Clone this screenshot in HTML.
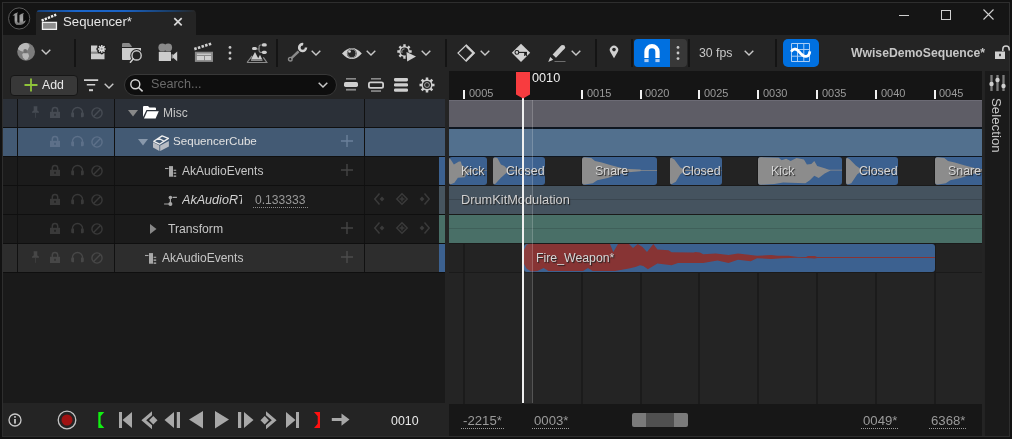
<!DOCTYPE html>
<html><head><meta charset="utf-8">
<style>
*{box-sizing:border-box;margin:0;padding:0}
html,body{width:1012px;height:439px;overflow:hidden;background:#121212;font-family:"Liberation Sans",sans-serif}
.a{position:absolute}
.t{position:absolute;white-space:nowrap;line-height:1;font-size:12px;will-change:transform}
svg{position:absolute;overflow:visible}
</style></head><body>
<!-- window frame -->
<div class="a" style="left:2px;top:2px;width:1008px;height:435px;border:1px solid #2e2e2e;background:#151515"></div>
<!-- title bar logo -->
<svg style="left:7px;top:6px" width="25" height="25" viewBox="0 0 25 25">
  <defs><linearGradient id="ug" x1="0" y1="0" x2="0" y2="1"><stop offset="0" stop-color="#8c8c8c"/><stop offset="0.6" stop-color="#a6a6a6"/><stop offset="1" stop-color="#6a6a6a"/></linearGradient></defs>
  <circle cx="12.15" cy="12.45" r="10.6" fill="#0b0b0b" stroke="#5c5c5c" stroke-width="1"/>
  <path d="M5.5 9.8 Q7.5 7 11 6.3 L10.3 7.8 L10.3 15.5 Q10.8 17.3 12.5 16.6 L12.5 9 Q14.5 7.3 17 6.9 L16.2 8.4 L16.2 15.8 L18.8 14.2 Q17.5 18.5 13.5 18.9 L9.5 18.9 Q7.3 18 7.6 15 L7.6 9.6 Q6.5 9.4 5.5 9.8 Z" fill="url(#ug)"/>
</svg>
<!-- tab -->
<div class="a" style="left:36px;top:10px;width:160px;height:25px;background:#242424;border-radius:4px 4px 0 0"></div>
<div class="a" style="left:37px;top:10px;width:158px;height:1.5px;border-radius:3px 3px 0 0;background:linear-gradient(90deg,#16407a 0%,#1a66cc 25%,#1a62c4 55%,#1a3d66 85%,#262626 100%)"></div>
<svg style="left:41px;top:14px" width="17" height="17" viewBox="0 0 17 17"><rect x="1.45" y="8.4" width="14" height="6.95" fill="#8e8e8e" stroke="#f0f0f0" stroke-width="1.3"/><path d="M0.6 6.6 L15.2 0.7" stroke="#eee" stroke-width="2.5" stroke-dasharray="2.3 1.1"/></svg>
<div class="t" style="left:63px;top:14.5px;font-size:13.2px;color:#e6e6e6">Sequencer*</div>
<svg style="left:173px;top:17px" width="10" height="10" viewBox="0 0 10 10"><path d="M1.3 1.1 L8.7 8.3 M8.7 1.1 L1.3 8.3" stroke="#d8d8d8" stroke-width="1.7"/></svg>
<!-- window controls -->
<div class="a" style="left:899px;top:15px;width:10px;height:1px;background:#d0d0d0"></div>
<div class="a" style="left:941px;top:10px;width:10px;height:10px;border:1px solid #d0d0d0"></div>
<svg style="left:983px;top:9px" width="11" height="11" viewBox="0 0 11 11"><path d="M0.5 0.5 L10.5 10.5 M10.5 0.5 L0.5 10.5" stroke="#d0d0d0" stroke-width="1.1"/></svg>

<!-- toolbar -->
<div class="a" style="left:3px;top:35px;width:1006px;height:36px;background:#242424"></div>

<!-- tree header row -->
<div class="a" style="left:3px;top:71px;width:446px;height:28px;background:#242424"></div>
<!-- ruler -->
<div class="a" style="left:449px;top:71px;width:533px;height:29px;background:#151515"></div>
<!-- sidebar -->
<div class="a" style="left:982px;top:71px;width:2px;height:365px;background:#242424"></div><div class="a" style="left:984px;top:71px;width:25px;height:365px;background:#1a1a1a;border-left:1px solid #232323"></div>

<!-- tree empty -->
<div class="a" style="left:3px;top:99px;width:442px;height:304px;background:#1a1a1a"></div>
<div class="a" style="left:445px;top:99px;width:4px;height:304px;background:#242424"></div>
<!-- track empty -->
<div class="a" style="left:449px;top:100px;width:533px;height:304px;background:#242424"></div>

<!-- transport bar -->
<div class="a" style="left:3px;top:403px;width:446px;height:33px;background:#242424"></div>
<div class="a" style="left:449px;top:404px;width:533px;height:32px;background:#171717"></div>

<!-- separators -->
<div class="a" style="left:74px;top:39px;width:2px;height:28px;background:#141414"></div>
<div class="a" style="left:276px;top:39px;width:2px;height:28px;background:#141414"></div>
<div class="a" style="left:445px;top:39px;width:2px;height:28px;background:#141414"></div>
<div class="a" style="left:595px;top:39px;width:2px;height:28px;background:#141414"></div>
<div class="a" style="left:631px;top:39px;width:2px;height:28px;background:#141414"></div>
<div class="a" style="left:688px;top:39px;width:2px;height:28px;background:#141414"></div>
<div class="a" style="left:775px;top:39px;width:2px;height:28px;background:#141414"></div>
<!-- globe -->
<svg style="left:17px;top:43px" width="18" height="18" viewBox="0 0 18 18">
  <defs><clipPath id="gl"><circle cx="9.1" cy="8.75" r="8.9"/></clipPath></defs>
  <circle cx="9.1" cy="8.75" r="8.9" fill="#7c7c7c"/>
  <g clip-path="url(#gl)">
  <path d="M0.8 6 L3.2 1.6 L7.9 -0.2 L11.2 0.6 L12.6 3 L10.7 6.9 L9.6 7.9 L6.3 8.8 L3.6 7.9 Z" fill="#b8b8b8"/>
  <path d="M6 10.3 L11.2 10.3 L12.1 12.9 L10.7 16.2 L8.2 17 L6 14.6 L5.2 11.8 Z" fill="#b8b8b8"/>
  </g>
  <circle cx="8.2" cy="8" r="1.9" fill="#6e6e6e"/>
</svg>
<svg style="left:41px;top:49px" width="10" height="6" viewBox="0 0 10 6"><path d="M0.7 0.7 L5 5 L9.3 0.7" fill="none" stroke="#c8c8c8" stroke-width="1.4"/></svg>
<!-- save new -->
<svg style="left:91px;top:44px" width="17" height="16" viewBox="0 0 17 16">
  <path d="M0 1.5 H6.5 V8 H13.5 V15.2 H0 Z" fill="#cdcdcd"/>
  <rect x="0" y="7.6" width="13.5" height="2.2" fill="#8a8a8a"/>
  <g stroke="#1e1e1e" stroke-width="3.2" stroke-linecap="round"><path d="M10.8 1 V8.8 M6.9 4.9 H14.7 M8.05 2.15 L13.55 7.65 M13.55 2.15 L8.05 7.65"/></g>
  <g stroke="#dcdcdc" stroke-width="1.5"><path d="M10.8 1 V8.8 M6.9 4.9 H14.7 M8.05 2.15 L13.55 7.65 M13.55 2.15 L8.05 7.65"/></g>
  <circle cx="10.7" cy="4.9" r="1.1" fill="#9a9a9a"/>
</svg>
<!-- folder search -->
<svg style="left:122px;top:43px" width="21" height="20" viewBox="0 0 21 20">
  <path d="M0 1.2 Q0 0.1 1.2 0.1 L7.2 0.1 L9.8 3.2 L9.8 3.9 L0 3.9 Z" fill="#8a8a8a"/>
  <path d="M0 4.9 L19 4.9 L19 17.1 L1.2 17.1 Q0 17.1 0 15.9 Z" fill="#cdcdcd"/>
  <circle cx="14.6" cy="12.4" r="6.3" fill="#242424"/>
  <path d="M11.6 15.6 L8.2 19.3" stroke="#242424" stroke-width="3.4"/>
  <circle cx="14.6" cy="12.4" r="4.6" fill="#242424" stroke="#cdcdcd" stroke-width="1.4"/>
  <path d="M11.4 15.8 L8.4 19.2" stroke="#cdcdcd" stroke-width="1.6" stroke-linecap="round"/>
</svg>
<!-- camera -->
<svg style="left:158px;top:43px" width="20" height="19" viewBox="0 0 20 19">
  <circle cx="4.3" cy="4.4" r="3.9" fill="#8a8a8a"/><circle cx="10.2" cy="4.4" r="3.9" fill="#8a8a8a"/>
  <rect x="0.8" y="8.8" width="12.2" height="9.3" rx="0.6" fill="#cdcdcd"/>
  <path d="M14.8 12.3 L19.2 8.6 L19.2 18.2 L14.8 14.5 Z" fill="#cdcdcd"/>
  <rect x="13.5" y="11.3" width="1.6" height="4.2" fill="#9a9a9a"/>
</svg>
<!-- clapper -->
<svg style="left:194px;top:43px" width="20" height="19" viewBox="0 0 20 19">
  <path d="M0.3 6.1 L18 0.4" stroke="#d0d0d0" stroke-width="2.7" stroke-dasharray="2.5 1.3"/>
  <rect x="0.9" y="8.75" width="18.1" height="10.15" fill="#8a8a8a"/>
  <rect x="2.9" y="13" width="7.1" height="4.1" fill="#cfcfcf"/><rect x="11" y="13" width="6.1" height="4.1" fill="#cfcfcf"/>
  <rect x="2.9" y="10.6" width="14.2" height="1.3" fill="#cfcfcf"/>
</svg>
<!-- dots -->
<svg style="left:227px;top:45px" width="6" height="16" viewBox="0 0 6 16"><circle cx="3" cy="2.4" r="1.4" fill="#c8c8c8"/><circle cx="3" cy="8" r="1.4" fill="#c8c8c8"/><circle cx="3" cy="13.6" r="1.4" fill="#c8c8c8"/></svg>
<!-- hierarchy -->
<svg style="left:244px;top:40px" width="28" height="26" viewBox="0 0 28 26">
  <path d="M13 9 H15.1 M17.8 5 H16.6 Q15.1 5 15.1 6.5 V10.8 Q15.1 12.3 16.6 12.3 H17.8" fill="none" stroke="#8a8a8a" stroke-width="1.2"/>
  <rect x="8" y="7.1" width="5" height="3" rx="1.5" fill="#cdcdcd"/>
  <rect x="17.8" y="3.3" width="5" height="3.2" rx="1.6" fill="#cdcdcd"/>
  <rect x="17.8" y="10.7" width="5" height="3.2" rx="1.6" fill="#cdcdcd"/>
  <path d="M3 22.5 H22.8 L19.3 17.3 M3 22.5 L8.2 15.8" fill="none" stroke="#8a8a8a" stroke-width="1.2"/>
  <path d="M7 19.6 L11 12.1 L14.2 18.2 L16 14.8 L18.3 19.6 Z" fill="#cdcdcd"/>
  <rect x="7" y="19.5" width="11.5" height="1.5" fill="#8a8a8a"/>
</svg>
<!-- wrench -->
<svg style="left:288px;top:43px" width="20" height="20" viewBox="0 0 20 20">
  <path d="M10.6 8.3 L3.2 15.3" stroke="#8a8a8a" stroke-width="2.5"/>
  <circle cx="2.3" cy="16.2" r="1.8" fill="none" stroke="#8a8a8a" stroke-width="1.4"/>
  <path d="M19.3 4.6 A4.7 4.7 0 1 1 15.4 -0.1 L15 2.6 A2.1 2.1 0 1 0 16.8 4.6 Z" fill="#d0d0d0"/>
</svg>
<svg style="left:311px;top:50px" width="10" height="6" viewBox="0 0 10 6"><path d="M0.7 0.7 L5 5 L9.3 0.7" fill="none" stroke="#c8c8c8" stroke-width="1.4"/></svg>
<!-- eye -->
<svg style="left:342px;top:47px" width="20" height="13" viewBox="0 0 20 13">
  <path d="M0 6.4 Q9.9 -4.6 19.8 6.4 Q9.9 17.4 0 6.4 Z" fill="#cfcfcf"/>
  <circle cx="9.8" cy="6.4" r="4.9" fill="#2a2a2a"/>
  <circle cx="9.8" cy="6.4" r="4.1" fill="none" stroke="#a8a8a8" stroke-width="0.9"/>
  <circle cx="9.8" cy="6.4" r="3.4" fill="#242424"/>
  <circle cx="7.6" cy="4.5" r="1.3" fill="#cfcfcf"/>
</svg>
<svg style="left:366px;top:50px" width="10" height="6" viewBox="0 0 10 6"><path d="M0.7 0.7 L5 5 L9.3 0.7" fill="none" stroke="#c8c8c8" stroke-width="1.4"/></svg>
<!-- gear play -->
<svg style="left:397px;top:44px" width="20" height="19" viewBox="0 0 20 19">
  <path d="M12.66 6.30 L14.70 6.30 L14.70 8.70 L12.66 8.70 L12.00 10.30 L13.44 11.74 L11.74 13.44 L10.30 12.00 L8.70 12.66 L8.70 14.70 L6.30 14.70 L6.30 12.66 L4.70 12.00 L3.26 13.44 L1.56 11.74 L3.00 10.30 L2.34 8.70 L0.30 8.70 L0.30 6.30 L2.34 6.30 L3.00 4.70 L1.56 3.26 L3.26 1.56 L4.70 3.00 L6.30 2.34 L6.30 0.30 L8.70 0.30 L8.70 2.34 L10.30 3.00 L11.74 1.56 L13.44 3.26 L12.00 4.70 Z" fill="#cfcfcf"/>
  <circle cx="7.5" cy="7.5" r="3.9" fill="#242424"/>
  <path d="M7.5 4.8 A2.7 2.7 0 0 0 5.2 9" fill="none" stroke="#8a8a8a" stroke-width="1.2"/>
  <path d="M8.3 6.8 L19.6 12.3 L9.3 18.6 Z" fill="#242424"/>
  <path d="M9.5 8 L19 12.4 L10.2 17.6 Z" fill="#cfcfcf"/>
</svg>
<svg style="left:421px;top:50px" width="10" height="6" viewBox="0 0 10 6"><path d="M0.7 0.7 L5 5 L9.3 0.7" fill="none" stroke="#c8c8c8" stroke-width="1.4"/></svg>
<!-- diamond -->
<svg style="left:457px;top:44px" width="19" height="19" viewBox="0 0 19 19">
  <path d="M9.2 1 L17.4 9.1 L9.2 17.2 L1 9.1 Z" fill="none" stroke="#cfcfcf" stroke-width="1.2"/>
  <path d="M9.2 0.6 L17.8 9.1 L9.2 17.6 L9.2 14.9 L15.1 9.1 L9.2 3.3 Z" fill="#cfcfcf"/>
</svg>
<svg style="left:480px;top:50px" width="10" height="6" viewBox="0 0 10 6"><path d="M0.7 0.7 L5 5 L9.3 0.7" fill="none" stroke="#c8c8c8" stroke-width="1.4"/></svg>
<!-- key diamond -->
<svg style="left:512px;top:44px" width="19" height="19" viewBox="0 0 19 19">
  <path d="M9 -0.3 L18.2 8.7 L9 17.9 L-0.2 8.7 Z" fill="#cfcfcf"/>
  <circle cx="4.9" cy="8.4" r="1.9" fill="none" stroke="#1a1a1a" stroke-width="1.1"/>
  <path d="M6.8 8.4 H14.9" stroke="#1a1a1a" stroke-width="1.1"/>
  <path d="M12.2 8 H14.9 V11.9 H14 L13.55 10.6 L13.1 11.9 H12.2 Z" fill="#1a1a1a"/>
</svg>
<!-- pencil -->
<svg style="left:548px;top:44px" width="19" height="19" viewBox="0 0 19 19">
  <path d="M6.3 12.1 L14.8 3.2" stroke="#cfcfcf" stroke-width="4.6"/>
  <circle cx="14.8" cy="3.2" r="2.3" fill="#cfcfcf"/>
  <path d="M0.2 17.9 L2.3 12.9 L5.2 15.7 Z" fill="#cfcfcf"/>
  <path d="M6.5 17.5 H17.5" stroke="#6e6e6e" stroke-width="1"/>
</svg>
<svg style="left:571px;top:50px" width="10" height="6" viewBox="0 0 10 6"><path d="M0.7 0.7 L5 5 L9.3 0.7" fill="none" stroke="#c8c8c8" stroke-width="1.4"/></svg>
<!-- pin -->
<svg style="left:609px;top:45px" width="10" height="14" viewBox="0 0 10 14">
  <path d="M5 13.3 L1.5 7.3 A4.2 4.2 0 1 1 8.5 7.3 Z" fill="#cfcfcf"/>
  <circle cx="5" cy="4.6" r="1.8" fill="#242424"/>
</svg>
<!-- magnet button -->
<div class="a" style="left:634px;top:39px;width:53px;height:28px;background:#383838;border-radius:4px"></div>
<div class="a" style="left:634px;top:39px;width:36px;height:28px;background:#0070e0;border-radius:4px 0 0 4px"></div>
<svg style="left:644px;top:43.8px" width="16" height="19" viewBox="0 0 16 19">
  <path d="M2.5 14 L2.5 7.7 A5.5 5.5 0 0 1 13.5 7.7 L13.5 14" fill="none" stroke="#fff" stroke-width="4.3"/>
  <rect x="0.4" y="15.1" width="4.2" height="3" fill="#b0cdf2"/><rect x="11.4" y="15.1" width="4.2" height="3" fill="#b0cdf2"/>
</svg>
<svg style="left:675px;top:45px" width="6" height="16" viewBox="0 0 6 16"><circle cx="3" cy="2.4" r="1.4" fill="#c8c8c8"/><circle cx="3" cy="8" r="1.4" fill="#c8c8c8"/><circle cx="3" cy="13.6" r="1.4" fill="#c8c8c8"/></svg>
<div class="t" style="left:699px;top:47px;font-size:12.3px;color:#c8c8c8">30 fps</div>
<svg style="left:744px;top:50px" width="10" height="6" viewBox="0 0 10 6"><path d="M0.7 0.7 L5 5 L9.3 0.7" fill="none" stroke="#c8c8c8" stroke-width="1.4"/></svg>
<!-- curve button -->
<div class="a" style="left:783px;top:39px;width:36px;height:28px;background:#0070e0;border-radius:5px"></div>
<svg style="left:791px;top:43px" width="20" height="19" viewBox="0 0 20 19">
  <path d="M0.5 0.5 H18.5 V18.5 H0.5 Z M6.5 0.5 V18.5 M12.8 0.5 V18.5 M0.5 6.5 H18.5 M0.5 13.2 H18.5" fill="none" stroke="#a9cdf6" stroke-width="1"/>
  <path d="M0.2 8.6 C2.2 5.2 5 5.2 7.8 8.4 C10.5 11.8 12.8 13.6 15 13.4 C17.2 13.2 18.5 11.5 18.8 8.3" fill="none" stroke="#fff" stroke-width="2.8"/>
</svg>
<div class="t" style="left:851px;top:47px;font-size:12.2px;font-weight:bold;color:#c6c6c6">WwiseDemoSequence*</div>
<!-- lock -->
<svg style="left:995px;top:45px" width="15" height="14" viewBox="0 0 15 14">
  <path d="M7.8 6 L7.8 4.2 A3.2 3.2 0 0 1 14.2 4.2 L14.2 5.5" fill="none" stroke="#cfcfcf" stroke-width="1.5"/>
  <rect x="0" y="6.5" width="10" height="7.5" fill="#cfcfcf"/>
  <rect x="4.2" y="8.8" width="1.6" height="2.4" fill="#242424"/>
</svg>

<!-- search row -->
<div class="a" style="left:9.5px;top:74.5px;width:68px;height:21px;background:#383838;border-radius:4px;border:1px solid #161616"></div>
<svg style="left:24px;top:78px" width="14" height="14" viewBox="0 0 14 14"><path d="M7 0.5 V13.5 M0.5 7 H13.5" stroke="#8fc43a" stroke-width="1.8"/></svg>
<div class="t" style="left:42px;top:79px;font-size:12.3px;color:#e8e8e8">Add</div>
<svg style="left:84px;top:79px" width="15" height="13" viewBox="0 0 15 13"><path d="M0 1.1 H14.2 M2.8 5.8 H11.2" stroke="#d0d0d0" stroke-width="1.6"/><rect x="5" y="10.2" width="4" height="2" fill="#d0d0d0"/></svg>
<svg style="left:104px;top:83px" width="10" height="6" viewBox="0 0 10 6"><path d="M0.7 0.7 L5 5 L9.3 0.7" fill="none" stroke="#c8c8c8" stroke-width="1.4"/></svg>
<div class="a" style="left:124px;top:74px;width:213px;height:22px;background:#0e0e0e;border:1px solid #383838;border-radius:11px"></div>
<svg style="left:130px;top:79px" width="14" height="13" viewBox="0 0 14 13"><circle cx="5.3" cy="5.3" r="4.5" fill="none" stroke="#d6d6d6" stroke-width="1.4"/><path d="M8.5 8.5 L12.6 12.4" stroke="#d6d6d6" stroke-width="1.6"/></svg>
<div class="t" style="left:151px;top:78px;font-size:12.6px;color:#6a6a6a">Search...</div>
<svg style="left:318px;top:82px" width="10" height="6" viewBox="0 0 10 6"><path d="M0.7 0.7 L5 5 L9.3 0.7" fill="none" stroke="#c8c8c8" stroke-width="1.5"/></svg>
<svg style="left:344px;top:78px" width="14" height="14" viewBox="0 0 14 14">
  <rect x="2" y="0" width="10" height="1.6" fill="#8a8a8a"/><rect x="0" y="3.9" width="14" height="5" rx="1.6" fill="#cfcfcf"/><rect x="2" y="10.8" width="10" height="1.8" fill="#8a8a8a"/>
</svg>
<svg style="left:368px;top:78px" width="16" height="14" viewBox="0 0 16 14">
  <rect x="3" y="0" width="10" height="1.6" fill="#8a8a8a"/><rect x="0.9" y="4.3" width="14.2" height="5.6" rx="1.6" fill="none" stroke="#cfcfcf" stroke-width="1.8"/><rect x="3" y="12.2" width="10" height="1.7" fill="#8a8a8a"/>
</svg>
<svg style="left:394px;top:78px" width="14" height="14" viewBox="0 0 14 14">
  <rect x="0" y="0" width="14" height="3.4" rx="1.3" fill="#cfcfcf"/><rect x="0" y="5.2" width="14" height="3.4" rx="1.3" fill="#cfcfcf"/><rect x="0" y="10.4" width="14" height="3.4" rx="1.3" fill="#cfcfcf"/>
</svg>
<svg style="left:419px;top:77px" width="16" height="16" viewBox="0 0 16 16"><path d="M13.46 6.74 L15.50 6.75 L15.50 9.25 L13.46 9.26 L12.75 10.96 L14.18 12.42 L12.42 14.18 L10.96 12.75 L9.26 13.46 L9.25 15.50 L6.75 15.50 L6.74 13.46 L5.04 12.75 L3.58 14.18 L1.82 12.42 L3.25 10.96 L2.54 9.26 L0.50 9.25 L0.50 6.75 L2.54 6.74 L3.25 5.04 L1.82 3.58 L3.58 1.82 L5.04 3.25 L6.74 2.54 L6.75 0.50 L9.25 0.50 L9.26 2.54 L10.96 3.25 L12.42 1.82 L14.18 3.58 L12.75 5.04 Z" fill="#cfcfcf"/><circle cx="8" cy="8" r="4.1" fill="#242424"/><circle cx="8" cy="8" r="2.4" fill="none" stroke="#a0a0a0" stroke-width="1"/></svg>


<div class="a" style="left:3px;top:99px;width:442px;height:28px;background:#2b3038"></div>
<div class="a" style="left:3px;top:127px;width:442px;height:1px;background:#0f0f0f"></div>
<div class="a" style="left:17px;top:99px;width:1px;height:28px;background:#111"></div>
<div class="a" style="left:114px;top:99px;width:1px;height:28px;background:#111"></div>
<div class="a" style="left:364px;top:99px;width:1px;height:28px;background:#111"></div>
<svg style="left:31px;top:106px" width="9" height="13" viewBox="0 0 9 13"><path d="M2.6 0.3 H6.4 Q6.2 2.5 6.3 4.5 Q8.2 5.2 8.1 6.8 H0.9 Q0.8 5.2 2.7 4.5 Q2.8 2.5 2.6 0.3 Z" fill="#464b53"/><path d="M4.5 7 V11.8" stroke="#464b53" stroke-width="1.1" opacity="0.6"/></svg>
<svg style="left:50px;top:107px" width="10" height="11" viewBox="0 0 10 11"><path d="M2.3 5 V3.3 A2.7 2.7 0 0 1 7.7 3.3 V5" fill="none" stroke="#464b53" stroke-width="1.5"/><rect x="0" y="4.8" width="10" height="6.2" fill="#464b53"/><rect x="4.3" y="6.8" width="1.4" height="2" fill="#2b3038"/></svg>
<svg style="left:71px;top:107px" width="13" height="11" viewBox="0 0 13 11"><path d="M1.4 8 V5.6 A5.1 5.1 0 0 1 11.6 5.6 V8" fill="none" stroke="#464b53" stroke-width="1.3"/><path d="M0.2 6.8 Q0.2 5.6 1.6 5.6 H3 V10.2 H1.6 Q0.2 10.2 0.2 9 Z M12.8 6.8 Q12.8 5.6 11.4 5.6 H10 V10.2 H11.4 Q12.8 10.2 12.8 9 Z" fill="#464b53"/></svg>
<svg style="left:91px;top:107px" width="12" height="12" viewBox="0 0 12 12"><circle cx="6" cy="6" r="5.1" fill="none" stroke="#464b53" stroke-width="1.4"/><path d="M2.6 9.4 L9.4 2.6" stroke="#464b53" stroke-width="1.4"/></svg>
<div class="a" style="left:3px;top:128px;width:442px;height:28px;background:#435a74"></div>
<div class="a" style="left:3px;top:156px;width:442px;height:1px;background:#0f0f0f"></div>
<div class="a" style="left:17px;top:128px;width:1px;height:28px;background:#111"></div>
<div class="a" style="left:114px;top:128px;width:1px;height:28px;background:#111"></div>
<div class="a" style="left:364px;top:128px;width:1px;height:28px;background:#111"></div>
<svg style="left:50px;top:136px" width="10" height="11" viewBox="0 0 10 11"><path d="M2.3 5 V3.3 A2.7 2.7 0 0 1 7.7 3.3 V5" fill="none" stroke="#5d7089" stroke-width="1.5"/><rect x="0" y="4.8" width="10" height="6.2" fill="#5d7089"/><rect x="4.3" y="6.8" width="1.4" height="2" fill="#435a74"/></svg>
<svg style="left:71px;top:136px" width="13" height="11" viewBox="0 0 13 11"><path d="M1.4 8 V5.6 A5.1 5.1 0 0 1 11.6 5.6 V8" fill="none" stroke="#5d7089" stroke-width="1.3"/><path d="M0.2 6.8 Q0.2 5.6 1.6 5.6 H3 V10.2 H1.6 Q0.2 10.2 0.2 9 Z M12.8 6.8 Q12.8 5.6 11.4 5.6 H10 V10.2 H11.4 Q12.8 10.2 12.8 9 Z" fill="#5d7089"/></svg>
<svg style="left:91px;top:136px" width="12" height="12" viewBox="0 0 12 12"><circle cx="6" cy="6" r="5.1" fill="none" stroke="#5d7089" stroke-width="1.4"/><path d="M2.6 9.4 L9.4 2.6" stroke="#5d7089" stroke-width="1.4"/></svg>
<svg style="left:341px;top:135px" width="12" height="12" viewBox="0 0 12 12"><path d="M6 0 V12 M0 6 H12" stroke="#6b809a" stroke-width="1.4"/></svg>
<div class="a" style="left:3px;top:157px;width:442px;height:28px;background:#1b1b1b"></div>
<div class="a" style="left:3px;top:185px;width:442px;height:1px;background:#0f0f0f"></div>
<div class="a" style="left:439px;top:157px;width:6px;height:28px;background:#3c6190"></div>
<div class="a" style="left:17px;top:157px;width:1px;height:28px;background:#111"></div>
<div class="a" style="left:114px;top:157px;width:1px;height:28px;background:#111"></div>
<div class="a" style="left:364px;top:157px;width:1px;height:28px;background:#111"></div>
<svg style="left:50px;top:165px" width="10" height="11" viewBox="0 0 10 11"><path d="M2.3 5 V3.3 A2.7 2.7 0 0 1 7.7 3.3 V5" fill="none" stroke="#393939" stroke-width="1.5"/><rect x="0" y="4.8" width="10" height="6.2" fill="#393939"/><rect x="4.3" y="6.8" width="1.4" height="2" fill="#1b1b1b"/></svg>
<svg style="left:71px;top:165px" width="13" height="11" viewBox="0 0 13 11"><path d="M1.4 8 V5.6 A5.1 5.1 0 0 1 11.6 5.6 V8" fill="none" stroke="#393939" stroke-width="1.3"/><path d="M0.2 6.8 Q0.2 5.6 1.6 5.6 H3 V10.2 H1.6 Q0.2 10.2 0.2 9 Z M12.8 6.8 Q12.8 5.6 11.4 5.6 H10 V10.2 H11.4 Q12.8 10.2 12.8 9 Z" fill="#393939"/></svg>
<svg style="left:91px;top:165px" width="12" height="12" viewBox="0 0 12 12"><circle cx="6" cy="6" r="5.1" fill="none" stroke="#393939" stroke-width="1.4"/><path d="M2.6 9.4 L9.4 2.6" stroke="#393939" stroke-width="1.4"/></svg>
<svg style="left:341px;top:164px" width="12" height="12" viewBox="0 0 12 12"><path d="M6 0 V12 M0 6 H12" stroke="#444" stroke-width="1.4"/></svg>
<div class="a" style="left:3px;top:186px;width:442px;height:28px;background:#1b1b1b"></div>
<div class="a" style="left:3px;top:214px;width:442px;height:1px;background:#0f0f0f"></div>
<div class="a" style="left:439px;top:186px;width:6px;height:28px;background:#47555f"></div>
<div class="a" style="left:17px;top:186px;width:1px;height:28px;background:#111"></div>
<div class="a" style="left:114px;top:186px;width:1px;height:28px;background:#111"></div>
<div class="a" style="left:364px;top:186px;width:1px;height:28px;background:#111"></div>
<svg style="left:50px;top:194px" width="10" height="11" viewBox="0 0 10 11"><path d="M2.3 5 V3.3 A2.7 2.7 0 0 1 7.7 3.3 V5" fill="none" stroke="#393939" stroke-width="1.5"/><rect x="0" y="4.8" width="10" height="6.2" fill="#393939"/><rect x="4.3" y="6.8" width="1.4" height="2" fill="#1b1b1b"/></svg>
<svg style="left:71px;top:194px" width="13" height="11" viewBox="0 0 13 11"><path d="M1.4 8 V5.6 A5.1 5.1 0 0 1 11.6 5.6 V8" fill="none" stroke="#393939" stroke-width="1.3"/><path d="M0.2 6.8 Q0.2 5.6 1.6 5.6 H3 V10.2 H1.6 Q0.2 10.2 0.2 9 Z M12.8 6.8 Q12.8 5.6 11.4 5.6 H10 V10.2 H11.4 Q12.8 10.2 12.8 9 Z" fill="#393939"/></svg>
<svg style="left:91px;top:194px" width="12" height="12" viewBox="0 0 12 12"><circle cx="6" cy="6" r="5.1" fill="none" stroke="#393939" stroke-width="1.4"/><path d="M2.6 9.4 L9.4 2.6" stroke="#393939" stroke-width="1.4"/></svg>
<svg style="left:374px;top:193px" width="12" height="12" viewBox="0 0 12 12"><path d="M5.5 0.5 L0.8 6 L5.5 11.5" fill="none" stroke="#3a3a3a" stroke-width="1.5"/><path d="M8 3.6 L10.4 6 L8 8.4 L5.6 6 Z" fill="#3a3a3a"/></svg>
<svg style="left:396px;top:193px" width="12" height="12" viewBox="0 0 12 12"><path d="M6 0.8 L11.2 6 L6 11.2 L0.8 6 Z" fill="none" stroke="#3a3a3a" stroke-width="1.5"/><path d="M6 3.5 V8.5 M3.5 6 H8.5" stroke="#3a3a3a" stroke-width="1.5"/></svg>
<svg style="left:418px;top:193px" width="12" height="12" viewBox="0 0 12 12"><path d="M6.5 0.5 L11.2 6 L6.5 11.5" fill="none" stroke="#3a3a3a" stroke-width="1.5"/><path d="M4 3.6 L6.4 6 L4 8.4 L1.6 6 Z" fill="#3a3a3a"/></svg>
<div class="a" style="left:3px;top:215px;width:442px;height:28px;background:#1b1b1b"></div>
<div class="a" style="left:3px;top:243px;width:442px;height:1px;background:#0f0f0f"></div>
<div class="a" style="left:439px;top:215px;width:6px;height:28px;background:#496f67"></div>
<div class="a" style="left:17px;top:215px;width:1px;height:28px;background:#111"></div>
<div class="a" style="left:114px;top:215px;width:1px;height:28px;background:#111"></div>
<div class="a" style="left:364px;top:215px;width:1px;height:28px;background:#111"></div>
<svg style="left:50px;top:223px" width="10" height="11" viewBox="0 0 10 11"><path d="M2.3 5 V3.3 A2.7 2.7 0 0 1 7.7 3.3 V5" fill="none" stroke="#393939" stroke-width="1.5"/><rect x="0" y="4.8" width="10" height="6.2" fill="#393939"/><rect x="4.3" y="6.8" width="1.4" height="2" fill="#1b1b1b"/></svg>
<svg style="left:71px;top:223px" width="13" height="11" viewBox="0 0 13 11"><path d="M1.4 8 V5.6 A5.1 5.1 0 0 1 11.6 5.6 V8" fill="none" stroke="#393939" stroke-width="1.3"/><path d="M0.2 6.8 Q0.2 5.6 1.6 5.6 H3 V10.2 H1.6 Q0.2 10.2 0.2 9 Z M12.8 6.8 Q12.8 5.6 11.4 5.6 H10 V10.2 H11.4 Q12.8 10.2 12.8 9 Z" fill="#393939"/></svg>
<svg style="left:91px;top:223px" width="12" height="12" viewBox="0 0 12 12"><circle cx="6" cy="6" r="5.1" fill="none" stroke="#393939" stroke-width="1.4"/><path d="M2.6 9.4 L9.4 2.6" stroke="#393939" stroke-width="1.4"/></svg>
<svg style="left:341px;top:222px" width="12" height="12" viewBox="0 0 12 12"><path d="M6 0 V12 M0 6 H12" stroke="#444" stroke-width="1.4"/></svg>
<svg style="left:374px;top:222px" width="12" height="12" viewBox="0 0 12 12"><path d="M5.5 0.5 L0.8 6 L5.5 11.5" fill="none" stroke="#3a3a3a" stroke-width="1.5"/><path d="M8 3.6 L10.4 6 L8 8.4 L5.6 6 Z" fill="#3a3a3a"/></svg>
<svg style="left:396px;top:222px" width="12" height="12" viewBox="0 0 12 12"><path d="M6 0.8 L11.2 6 L6 11.2 L0.8 6 Z" fill="none" stroke="#3a3a3a" stroke-width="1.5"/><path d="M6 3.5 V8.5 M3.5 6 H8.5" stroke="#3a3a3a" stroke-width="1.5"/></svg>
<svg style="left:418px;top:222px" width="12" height="12" viewBox="0 0 12 12"><path d="M6.5 0.5 L11.2 6 L6.5 11.5" fill="none" stroke="#3a3a3a" stroke-width="1.5"/><path d="M4 3.6 L6.4 6 L4 8.4 L1.6 6 Z" fill="#3a3a3a"/></svg>
<div class="a" style="left:3px;top:244px;width:442px;height:28px;background:#2d2d2d"></div>
<div class="a" style="left:3px;top:272px;width:442px;height:1px;background:#0f0f0f"></div>
<div class="a" style="left:439px;top:244px;width:6px;height:28px;background:#3c6190"></div>
<div class="a" style="left:17px;top:244px;width:1px;height:28px;background:#111"></div>
<div class="a" style="left:114px;top:244px;width:1px;height:28px;background:#111"></div>
<div class="a" style="left:364px;top:244px;width:1px;height:28px;background:#111"></div>
<svg style="left:31px;top:251px" width="9" height="13" viewBox="0 0 9 13"><path d="M2.6 0.3 H6.4 Q6.2 2.5 6.3 4.5 Q8.2 5.2 8.1 6.8 H0.9 Q0.8 5.2 2.7 4.5 Q2.8 2.5 2.6 0.3 Z" fill="#474747"/><path d="M4.5 7 V11.8" stroke="#474747" stroke-width="1.1" opacity="0.6"/></svg>
<svg style="left:50px;top:252px" width="10" height="11" viewBox="0 0 10 11"><path d="M2.3 5 V3.3 A2.7 2.7 0 0 1 7.7 3.3 V5" fill="none" stroke="#474747" stroke-width="1.5"/><rect x="0" y="4.8" width="10" height="6.2" fill="#474747"/><rect x="4.3" y="6.8" width="1.4" height="2" fill="#2d2d2d"/></svg>
<svg style="left:71px;top:252px" width="13" height="11" viewBox="0 0 13 11"><path d="M1.4 8 V5.6 A5.1 5.1 0 0 1 11.6 5.6 V8" fill="none" stroke="#474747" stroke-width="1.3"/><path d="M0.2 6.8 Q0.2 5.6 1.6 5.6 H3 V10.2 H1.6 Q0.2 10.2 0.2 9 Z M12.8 6.8 Q12.8 5.6 11.4 5.6 H10 V10.2 H11.4 Q12.8 10.2 12.8 9 Z" fill="#474747"/></svg>
<svg style="left:91px;top:252px" width="12" height="12" viewBox="0 0 12 12"><circle cx="6" cy="6" r="5.1" fill="none" stroke="#474747" stroke-width="1.4"/><path d="M2.6 9.4 L9.4 2.6" stroke="#474747" stroke-width="1.4"/></svg>
<svg style="left:341px;top:251px" width="12" height="12" viewBox="0 0 12 12"><path d="M6 0 V12 M0 6 H12" stroke="#4c4c4c" stroke-width="1.4"/></svg>
<!-- labels -->
<svg style="left:128px;top:110px" width="10" height="7" viewBox="0 0 10 7"><path d="M0 0 H10 L5 6.5 Z" fill="#888"/></svg>
<svg style="left:143px;top:106px" width="16" height="13" viewBox="0 0 16 13"><path d="M0 1 Q0 0 1 0 H5 L6.5 1.5 H12 Q13 1.5 13 2.5 V4 H3.5 L0 11 Z" fill="#fff"/><path d="M1 12.5 L4.2 5.2 H15.8 L12.6 12.5 Z" fill="#fff"/></svg>
<div class="t" style="left:163px;top:107px;color:#c6c6c6">Misc</div>
<svg style="left:138px;top:139px" width="10" height="7" viewBox="0 0 10 7"><path d="M0 0 H10 L5 6.5 Z" fill="#8898ab"/></svg>
<svg style="left:152px;top:134.8px" width="18" height="17" viewBox="0 0 18 17"><path d="M1.8 6.3 L10.1 0.9 L16.4 3.4 L7.5 9.2 Z M6.1 3.1 L11.8 6" fill="none" stroke="#f0f0f0" stroke-width="1.3" stroke-linejoin="round"/><path d="M1 7.3 L7.4 10.4 V16 L1 12.6 Z" fill="#b8bcc3"/><path d="M8.2 10.4 L16.9 5.9 V11.5 L8.2 16 Z" fill="#b8bcc3"/></svg>
<div class="t" style="left:173px;top:135px;font-size:11.6px;color:#e2e2e2">SequencerCube</div>
<svg style="left:165px;top:166px" width="12" height="12" viewBox="0 0 12 12"><path d="M0 2.5 H3.5" stroke="#a8a8a8" stroke-width="1.1"/><rect x="4" y="0.1" width="4" height="10.6" fill="#a8a8a8"/><path d="M8.6 4.2 H11.2 M8.6 7.1 H11.2 M8.6 10.1 H11.2" stroke="#b8b8b8" stroke-width="1.1"/></svg>
<div class="t" style="left:182px;top:165px;color:#c6c6c6">AkAudioEvents</div>
<svg style="left:164px;top:195px" width="14" height="12" viewBox="0 0 14 12"><path d="M6.4 2.5 V9" stroke="#a0a0a0" stroke-width="1.2"/><circle cx="6.4" cy="2.5" r="1.8" fill="#a8a8a8"/><circle cx="6.4" cy="9" r="2" fill="#a8a8a8"/><path d="M8.6 2.4 H12.9 M0.1 9 H5.3" stroke="#a8a8a8" stroke-width="1.2"/></svg>
<div class="a" style="left:182px;top:190px;width:59.5px;height:20px;overflow:hidden"><div class="t" style="left:0;top:4px;font-size:12.6px;font-style:italic;color:#d2d2d2">AkAudioRTPC</div></div>
<div class="t" style="left:255px;top:194px;color:#9a9a9a;font-size:12.1px">0.133333</div>
<div class="a" style="left:253px;top:207px;width:55px;height:1px;border-top:1px dotted #8a8a8a"></div>
<svg style="left:150px;top:224px" width="7" height="10" viewBox="0 0 7 10"><path d="M0 0 V10 L6.5 5 Z" fill="#888"/></svg>
<div class="t" style="left:168px;top:223px;color:#c6c6c6;font-size:12.2px">Transform</div>
<svg style="left:145px;top:253px" width="12" height="12" viewBox="0 0 12 12"><path d="M0 2.5 H3.5" stroke="#a8a8a8" stroke-width="1.1"/><rect x="4" y="0.1" width="4" height="10.6" fill="#a8a8a8"/><path d="M8.6 4.2 H11.2 M8.6 7.1 H11.2 M8.6 10.1 H11.2" stroke="#b8b8b8" stroke-width="1.1"/></svg>
<div class="t" style="left:162px;top:252px;color:#c6c6c6">AkAudioEvents</div>

<!-- grid lines -->
<div class="a" style="left:463px;top:100px;width:2px;height:304px;background:#1b1b1b"></div>
<div class="a" style="left:522px;top:100px;width:2px;height:304px;background:#1b1b1b"></div>
<div class="a" style="left:581px;top:100px;width:2px;height:304px;background:#1b1b1b"></div>
<div class="a" style="left:640px;top:100px;width:2px;height:304px;background:#1b1b1b"></div>
<div class="a" style="left:698px;top:100px;width:2px;height:304px;background:#1b1b1b"></div>
<div class="a" style="left:757px;top:100px;width:2px;height:304px;background:#1b1b1b"></div>
<div class="a" style="left:816px;top:100px;width:2px;height:304px;background:#1b1b1b"></div>
<div class="a" style="left:875px;top:100px;width:2px;height:304px;background:#1b1b1b"></div>
<div class="a" style="left:934px;top:100px;width:2px;height:304px;background:#1b1b1b"></div>

<div class="a" style="left:449px;top:100px;width:533px;height:27px;background:#5e5d66;border-top:1px solid #6c6b75"></div>
<div class="a" style="left:449px;top:127px;width:533px;height:2px;background:#0e1620"></div>
<div class="a" style="left:449px;top:129px;width:533px;height:27px;background:#52708e"></div>
<div class="a" style="left:449px;top:156px;width:533px;height:1px;background:#0e1620"></div>
<div class="a" style="left:449px;top:157px;width:533px;height:28px;background:#232323"></div>
<div class="a" style="left:449px;top:185px;width:533px;height:1px;background:#1a1a1a"></div>
<div class="a" style="left:449px;top:186px;width:533px;height:28px;background:#45535f"></div>
<div class="a" style="left:449px;top:199px;width:533px;height:1px;background:#3a4650"></div>
<div class="a" style="left:449px;top:214px;width:533px;height:1px;background:#1a1a1a"></div>
<div class="a" style="left:449px;top:215px;width:533px;height:28px;background:#496f67"></div>
<div class="a" style="left:449px;top:228px;width:533px;height:1px;background:#3f605a"></div>
<div class="a" style="left:449px;top:243px;width:533px;height:1px;background:#1a1a1a"></div>
<div class="a" style="left:449px;top:244px;width:533px;height:28px;background:#232323"></div>
<div class="a" style="left:449px;top:272px;width:533px;height:1px;background:#1a1a1a"></div>
<div class="a" style="left:463px;top:157px;width:2px;height:28px;background:#1b1b1b"></div>
<div class="a" style="left:463px;top:244px;width:2px;height:28px;background:#1b1b1b"></div>
<div class="a" style="left:463px;top:273px;width:2px;height:131px;background:#1b1b1b"></div>
<div class="a" style="left:522px;top:157px;width:2px;height:28px;background:#1b1b1b"></div>
<div class="a" style="left:522px;top:244px;width:2px;height:28px;background:#1b1b1b"></div>
<div class="a" style="left:522px;top:273px;width:2px;height:131px;background:#1b1b1b"></div>
<div class="a" style="left:581px;top:157px;width:2px;height:28px;background:#1b1b1b"></div>
<div class="a" style="left:581px;top:244px;width:2px;height:28px;background:#1b1b1b"></div>
<div class="a" style="left:581px;top:273px;width:2px;height:131px;background:#1b1b1b"></div>
<div class="a" style="left:640px;top:157px;width:2px;height:28px;background:#1b1b1b"></div>
<div class="a" style="left:640px;top:244px;width:2px;height:28px;background:#1b1b1b"></div>
<div class="a" style="left:640px;top:273px;width:2px;height:131px;background:#1b1b1b"></div>
<div class="a" style="left:698px;top:157px;width:2px;height:28px;background:#1b1b1b"></div>
<div class="a" style="left:698px;top:244px;width:2px;height:28px;background:#1b1b1b"></div>
<div class="a" style="left:698px;top:273px;width:2px;height:131px;background:#1b1b1b"></div>
<div class="a" style="left:757px;top:157px;width:2px;height:28px;background:#1b1b1b"></div>
<div class="a" style="left:757px;top:244px;width:2px;height:28px;background:#1b1b1b"></div>
<div class="a" style="left:757px;top:273px;width:2px;height:131px;background:#1b1b1b"></div>
<div class="a" style="left:816px;top:157px;width:2px;height:28px;background:#1b1b1b"></div>
<div class="a" style="left:816px;top:244px;width:2px;height:28px;background:#1b1b1b"></div>
<div class="a" style="left:816px;top:273px;width:2px;height:131px;background:#1b1b1b"></div>
<div class="a" style="left:875px;top:157px;width:2px;height:28px;background:#1b1b1b"></div>
<div class="a" style="left:875px;top:244px;width:2px;height:28px;background:#1b1b1b"></div>
<div class="a" style="left:875px;top:273px;width:2px;height:131px;background:#1b1b1b"></div>
<div class="a" style="left:934px;top:157px;width:2px;height:28px;background:#1b1b1b"></div>
<div class="a" style="left:934px;top:244px;width:2px;height:28px;background:#1b1b1b"></div>
<div class="a" style="left:934px;top:273px;width:2px;height:131px;background:#1b1b1b"></div>
<svg style="left:0;top:0" width="1012" height="439" viewBox="0 0 1012 439"><defs><clipPath id="trk"><rect x="449" y="150" width="533" height="130"/></clipPath>
<clipPath id="c0"><rect x="449" y="157" width="38" height="28" rx="3"/></clipPath>
<clipPath id="c1"><rect x="493" y="157" width="52" height="28" rx="3"/></clipPath>
<clipPath id="c2"><rect x="582" y="157" width="75" height="28" rx="3"/></clipPath>
<clipPath id="c3"><rect x="670" y="157" width="52" height="28" rx="3"/></clipPath>
<clipPath id="c4"><rect x="758" y="157" width="84" height="28" rx="3"/></clipPath>
<clipPath id="c5"><rect x="846" y="157" width="52" height="28" rx="3"/></clipPath>
<clipPath id="c6"><rect x="935" y="157" width="75" height="28" rx="3"/></clipPath>
<clipPath id="fw"><rect x="524" y="244" width="411" height="28" rx="3"/></clipPath></defs><g clip-path="url(#trk)">
<g clip-path="url(#c0)"><rect x="449" y="157" width="38" height="28" fill="#3c6190"/><polygon points="449.0,157.0 453.9,164.4 458.9,161.4 460.8,161.4 461.8,164.9 466.8,168.8 472.7,169.8 487.0,170.3 487.0,170.8 472.7,171.3 466.8,173.3 464.8,177.2 457.9,177.7 454.4,182.7 449.0,185.0" fill="#8c8c8c"/></g>
<g clip-path="url(#c1)"><rect x="493" y="157" width="52" height="28" fill="#3c6190"/><polygon points="493.0,157.0 497.4,158.0 500.9,164.4 504.3,165.9 508.3,169.8 545.0,170.3 545.0,170.8 508.3,171.3 504.3,174.8 500.9,177.7 495.4,183.7 493.0,185.0" fill="#8c8c8c"/></g>
<g clip-path="url(#c2)"><rect x="582" y="157" width="75" height="28" fill="#3c6190"/><polygon points="582.0,157.0 591.3,158.0 595.0,161.0 601.7,162.4 612.0,165.4 622.5,168.3 628.4,169.1 640.2,169.4 641.0,170.1 657.0,170.1 657.0,170.7 641.0,170.7 640.2,171.3 625.4,172.5 616.5,175.0 607.6,178.0 597.3,180.2 592.8,183.2 582.0,185.0" fill="#8c8c8c"/></g>
<g clip-path="url(#c3)"><rect x="670" y="157" width="52" height="28" fill="#3c6190"/><polygon points="670.0,157.0 674.3,159.4 680.3,167.6 684.7,169.8 722.0,170.3 722.0,170.8 684.7,171.0 680.3,174.3 675.8,181.7 670.0,185.0" fill="#8c8c8c"/></g>
<g clip-path="url(#c4)"><rect x="758" y="157" width="84" height="28" fill="#3c6190"/><polygon points="758.0,157.0 778.7,157.7 781.7,160.2 786.1,158.7 790.6,160.9 796.5,158.0 803.9,159.4 806.9,164.6 811.3,163.9 814.3,160.9 817.2,166.1 824.7,168.3 829.1,169.8 842.0,169.8 842.0,170.6 830.6,170.6 824.7,173.5 818.7,178.0 814.3,175.7 809.8,180.2 805.4,183.2 783.2,182.4 774.3,183.9 758.0,185.0" fill="#8c8c8c"/></g>
<g clip-path="url(#c5)"><rect x="846" y="157" width="52" height="28" fill="#3c6190"/><polygon points="846.0,157.0 849.9,159.4 855.8,165.4 861.7,169.8 898.0,170.3 898.0,170.8 861.7,171.3 857.3,174.3 851.3,183.2 846.0,185.0" fill="#8c8c8c"/></g>
<g clip-path="url(#c6)"><rect x="935" y="157" width="75" height="28" fill="#3c6190"/><polygon points="935.0,157.0 944.3,158.0 948.0,161.0 954.7,162.4 965.0,165.4 975.5,168.3 981.4,169.1 993.2,169.4 994.0,170.1 1010.0,170.1 1010.0,170.7 994.0,170.7 993.2,171.3 978.4,172.5 969.5,175.0 960.6,178.0 950.3,180.2 945.8,183.2 935.0,185.0" fill="#8c8c8c"/></g>
<g clip-path="url(#fw)"><rect x="524" y="244" width="411" height="28" fill="#3c6190"/><polygon points="524.0,250.0 526.5,245.0 528.5,244.0 610.0,244.0 613.3,251.9 618.0,244.0 629.0,244.0 633.0,247.9 637.8,244.0 642.5,247.1 647.0,251.9 653.4,244.0 657.4,249.5 668.5,250.3 671.6,252.3 693.8,252.6 695.3,251.9 700.0,252.6 703.2,254.2 715.9,253.4 728.5,255.0 738.0,253.4 750.7,255.0 757.0,255.8 771.2,255.0 777.5,255.8 788.6,255.8 798.0,257.0 806.0,257.0 808.0,256.0 815.0,256.0 817.0,257.0 935.0,257.1 935.0,258.1 817.0,258.0 815.0,258.5 806.0,258.0 798.0,257.8 782.3,258.2 771.2,259.0 757.0,258.2 750.7,261.3 738.0,259.8 728.5,262.9 717.5,260.6 703.2,262.9 678.0,262.9 671.6,265.3 657.4,263.4 647.9,269.2 643.3,266.0 640.0,265.3 635.4,266.9 629.0,268.5 615.0,271.0 592.7,271.0 588.0,268.1 583.0,271.0 548.5,271.0 543.7,268.1 537.4,271.0 531.0,271.5 526.5,268.5 524.0,264.0" fill="#873434"/></g>
</g></svg>
<div class="a" style="left:449px;top:157px;width:533px;height:28px;overflow:hidden">
<div class="t" style="left:11.7px;top:8px;font-size:12.4px;color:#d6d6d6;text-shadow:1px 1px 1px #1e1e1e">Kick</div>
<div class="t" style="left:56.8px;top:8px;font-size:12.4px;color:#d6d6d6;text-shadow:1px 1px 1px #1e1e1e">Closed</div>
<div class="t" style="left:145.7px;top:8px;font-size:12.4px;color:#d6d6d6;text-shadow:1px 1px 1px #1e1e1e">Snare</div>
<div class="t" style="left:233.4px;top:8px;font-size:12.4px;color:#d6d6d6;text-shadow:1px 1px 1px #1e1e1e">Closed</div>
<div class="t" style="left:321.7px;top:8px;font-size:12.4px;color:#d6d6d6;text-shadow:1px 1px 1px #1e1e1e">Kick</div>
<div class="t" style="left:409.9px;top:8px;font-size:12.4px;color:#d6d6d6;text-shadow:1px 1px 1px #1e1e1e">Closed</div>
<div class="t" style="left:498.8px;top:8px;font-size:12.4px;color:#d6d6d6;text-shadow:1px 1px 1px #1e1e1e">Snare</div>
</div>
<div class="t" style="left:461px;top:193.5px;color:#d0d0d0;font-size:12.8px;text-shadow:1px 1px 1px #222">DrumKitModulation</div>
<div class="t" style="left:536px;top:252px;color:#d6d6d6;font-size:12.3px;text-shadow:1px 1px 1px #222">Fire_Weapon*</div>
<!-- playhead -->
<div class="a" style="left:524px;top:100px;width:8px;height:303px;background:rgba(255,255,255,0.055)"></div>
<div class="a" style="left:532px;top:100px;width:1px;height:303px;background:rgba(255,255,255,0.22)"></div>
<div class="a" style="left:522px;top:88px;width:2px;height:315px;background:#f0f0f0"></div>
<div class="a" style="left:463px;top:90px;width:2px;height:9px;background:#f0f0f0"></div>
<div class="t" style="left:469px;top:87.6px;font-size:11px;color:#9a9a9a">0005</div>
<div class="a" style="left:581px;top:90px;width:2px;height:9px;background:#f0f0f0"></div>
<div class="t" style="left:587px;top:87.6px;font-size:11px;color:#9a9a9a">0015</div>
<div class="a" style="left:640px;top:90px;width:2px;height:9px;background:#f0f0f0"></div>
<div class="t" style="left:645px;top:87.6px;font-size:11px;color:#9a9a9a">0020</div>
<div class="a" style="left:698px;top:90px;width:2px;height:9px;background:#f0f0f0"></div>
<div class="t" style="left:704px;top:87.6px;font-size:11px;color:#9a9a9a">0025</div>
<div class="a" style="left:757px;top:90px;width:2px;height:9px;background:#f0f0f0"></div>
<div class="t" style="left:763px;top:87.6px;font-size:11px;color:#9a9a9a">0030</div>
<div class="a" style="left:816px;top:90px;width:2px;height:9px;background:#f0f0f0"></div>
<div class="t" style="left:822px;top:87.6px;font-size:11px;color:#9a9a9a">0035</div>
<div class="a" style="left:875px;top:90px;width:2px;height:9px;background:#f0f0f0"></div>
<div class="t" style="left:881px;top:87.6px;font-size:11px;color:#9a9a9a">0040</div>
<div class="a" style="left:934px;top:90px;width:2px;height:9px;background:#f0f0f0"></div>
<div class="t" style="left:939px;top:87.6px;font-size:11px;color:#9a9a9a">0045</div>
<svg style="left:516px;top:72px" width="14" height="27" viewBox="0 0 14 27"><path d="M0 0 H14 V22.6 L7 26.6 L0 22.6 Z" fill="#f83c3f"/></svg>
<div class="t" style="left:532px;top:72px;font-size:12.7px;color:#f0f0f0">0010</div>
<!-- sidebar -->
<svg style="left:988.5px;top:75px" width="17" height="16" viewBox="0 0 17 16"><path d="M2.5 0 V16 M8.5 0 V16 M14.5 0 V16" stroke="#7c7c7c" stroke-width="2.3"/><circle cx="2.5" cy="9" r="2.2" fill="#d0d0d0"/><circle cx="8.5" cy="5" r="2.2" fill="#d0d0d0"/><circle cx="14.5" cy="11" r="2.2" fill="#d0d0d0"/></svg>
<div class="t" style="left:1003px;top:97.5px;font-size:13.3px;color:#c6c6c6;transform-origin:0 0;transform:rotate(90deg)">Selection</div>

<svg style="left:8px;top:413px" width="14" height="14" viewBox="0 0 14 14"><circle cx="7" cy="7" r="6" fill="none" stroke="#c8c8c8" stroke-width="1.3"/><rect x="6.2" y="6" width="1.6" height="4.6" fill="#d8d8d8"/><circle cx="7" cy="3.9" r="0.95" fill="#d8d8d8"/></svg>
<svg style="left:57px;top:410px" width="20" height="20" viewBox="0 0 20 20"><circle cx="10" cy="10" r="8.8" fill="none" stroke="#c4c4c4" stroke-width="1.3"/><circle cx="10" cy="10" r="5.5" fill="#a01212"/></svg>
<svg style="left:97.7px;top:412px" width="8" height="17" viewBox="0 0 8 17"><path d="M0.3 0 H6.3 L2.6 4.3 V11.7 L6.3 16 H0.3 Z" fill="#12f012"/></svg>
<svg style="left:118px;top:411px" width="16" height="18" viewBox="0 0 16 18"><rect x="1" y="1" width="3" height="16" fill="#a8a8a8"/><path d="M4.5 9 L14 1 V17 Z" fill="#a8a8a8"/></svg>
<svg style="left:141px;top:410px" width="17" height="20" viewBox="0 0 17 20"><path d="M11 1.2 L0.4 10.2 L11 19.2 L11 15.2 L5.2 10.2 L11 5.2 Z" fill="#a8a8a8"/><path d="M12.3 6 L16.5 10.2 L12.3 14.4 L8.1 10.2 Z" fill="#a8a8a8"/></svg>
<svg style="left:164px;top:411px" width="17" height="18" viewBox="0 0 17 18"><path d="M0.5 9 L10 1 V17 Z" fill="#a8a8a8"/><rect x="12.8" y="1" width="3.2" height="16" fill="#a8a8a8"/></svg>
<svg style="left:189px;top:410px" width="15" height="20" viewBox="0 0 15 20"><path d="M0 9.5 L14 1 V18.5 Z" fill="#a8a8a8"/></svg>
<svg style="left:215px;top:410px" width="15" height="20" viewBox="0 0 15 20"><path d="M14 9.5 L0 1 V18.5 Z" fill="#a8a8a8"/></svg>
<svg style="left:237px;top:411px" width="17" height="18" viewBox="0 0 17 18"><rect x="1" y="1" width="3.2" height="16" fill="#a8a8a8"/><path d="M16.5 9 L7 1 V17 Z" fill="#a8a8a8"/></svg>
<svg style="left:260px;top:410px" width="17" height="20" viewBox="0 0 17 20"><path d="M6 1.2 L16.6 10.2 L6 19.2 L6 15.2 L11.8 10.2 L6 5.2 Z" fill="#a8a8a8"/><path d="M4.7 6 L8.9 10.2 L4.7 14.4 L0.5 10.2 Z" fill="#a8a8a8"/></svg>
<svg style="left:285px;top:411px" width="16" height="18" viewBox="0 0 16 18"><path d="M1 1 L10.5 9 L1 17 Z" fill="#a8a8a8"/><rect x="11" y="1" width="3" height="16" fill="#a8a8a8"/></svg>
<svg style="left:313px;top:412px" width="8" height="17" viewBox="0 0 8 17"><path d="M7 0 H1 L4.7 4.3 V11.7 L1 16 H7 Z" fill="#ff1010"/></svg>
<svg style="left:331px;top:413px" width="20" height="14" viewBox="0 0 20 14"><path d="M0.8 5.1 H10.5 V0.4 L18.5 6.5 L10.5 12.7 V8.1 H0.8 Z" fill="#a8a8a8"/></svg>
<div class="t" style="left:391px;top:415px;font-size:12.4px;color:#eaeaea">0010</div>
<!-- timeline bottom -->
<div class="t" style="left:463px;top:414px;font-size:13.2px;color:#9a9a9a">-2215*</div>
<div class="a" style="left:461px;top:428px;width:43px;height:1px;border-top:1px dotted #9a9a9a"></div>
<div class="t" style="left:534px;top:414px;font-size:13.2px;color:#9a9a9a">0003*</div>
<div class="a" style="left:532px;top:428px;width:37px;height:1px;border-top:1px dotted #9a9a9a"></div>
<div class="a" style="left:632px;top:413px;width:56px;height:14px;background:#7a7a7a;border-radius:2px"></div>
<div class="a" style="left:646px;top:413px;width:28px;height:14px;background:#505050"></div>
<div class="t" style="left:863px;top:414px;font-size:13.2px;color:#9a9a9a">0049*</div>
<div class="a" style="left:861px;top:428px;width:37px;height:1px;border-top:1px dotted #9a9a9a"></div>
<div class="t" style="left:931px;top:414px;font-size:13.2px;color:#9a9a9a">6368*</div>
<div class="a" style="left:929px;top:428px;width:37px;height:1px;border-top:1px dotted #9a9a9a"></div>
</body></html>
